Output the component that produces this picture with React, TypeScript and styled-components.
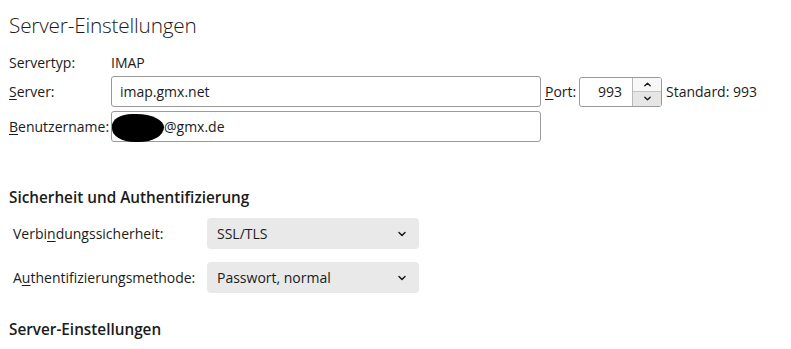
import React from "react";
import styled, { createGlobalStyle } from "styled-components";

const GlobalStyle = createGlobalStyle`
  html, body {
    margin: 0;
    padding: 0;
    background: #ffffff;
  }
  body {
    font-family: "Open Sans", "Noto Sans", sans-serif;
    color: #1b1b1b;
    font-size: 14px;
  }
`;

const Page = styled.div`
  width: 791px;
  height: 349px;
  overflow: hidden;
  padding: 0 0 0 9px;
  box-sizing: border-box;
`;

const Title = styled.h1`
  margin: 0;
  padding-top: 10px;
  font-size: 20.8px;
  font-weight: 300;
  line-height: 30px;
  letter-spacing: -0.2px;
`;

const ServerGrid = styled.div`
  display: grid;
  grid-template-columns: 102px 430px 38px 83px 1fr;
  grid-template-rows: 20px 31px 31px;
  row-gap: 4px;
  align-items: center;
  margin-top: 12px;
`;

const Label = styled.label`
  white-space: nowrap;
`;

const Key = styled.span`
  text-decoration: underline;
  text-underline-offset: 2px;
`;

const Field = styled.div`
  box-sizing: border-box;
  height: 31px;
  border: 1px solid #9a9a9a;
  border-radius: 3px;
  display: flex;
  align-items: center;
  padding: 0 8px;
  background: #fff;
`;

const Redaction = styled.span`
  display: inline-block;
  width: 52px;
  height: 28px;
  margin-left: -8px;
  margin-top: 2px;
  background: #000;
  border-radius: 40% 55% 50% 45% / 45% 50% 55% 50%;
`;

const PortLabel = styled(Label)`
  padding-left: 4px;
`;

const PortBox = styled.div`
  box-sizing: border-box;
  height: 30px;
  border: 1px solid #9a9a9a;
  border-radius: 3px;
  display: flex;
  overflow: hidden;
`;

const PortValue = styled.div`
  flex: 1;
  display: flex;
  align-items: center;
  justify-content: flex-end;
  padding-right: 10px;
`;

const Spin = styled.div`
  width: 28px;
  border-left: 1px solid #b8b8b8;
  display: flex;
  flex-direction: column;
  background: #f0f0f0;
`;

const SpinButton = styled.div<{ $top?: boolean }>`
  flex: 1;
  display: flex;
  align-items: center;
  justify-content: center;
  background: ${(p) => (p.$top ? "#f7f7f7" : "#e6e6e6")};
  border-top: ${(p) => (p.$top ? "none" : "1px solid #c4c4c4")};
`;

const Standard = styled.span`
  padding-left: 4px;
  white-space: nowrap;
`;

const SectionTitle = styled.h2<{ $top: number }>`
  margin: ${(p) => p.$top}px 0 0 0;
  font-size: 15.3px;
  font-weight: 600;
  line-height: 20px;
`;

const SelectGrid = styled.div`
  display: grid;
  grid-template-columns: 194px 212px;
  row-gap: 13px;
  align-items: center;
  margin-top: 11px;
  padding-left: 4px;
`;

const Select = styled.div`
  box-sizing: border-box;
  height: 31px;
  border-radius: 4px;
  background: #e9e9e9;
  display: flex;
  align-items: center;
  justify-content: space-between;
  padding: 0 12px 0 10px;
`;

const Chevron = ({ up = false, size = 10 }: { up?: boolean; size?: number }) => (
  <svg width={size} height={size} viewBox="0 0 10 10">
    <path
      d={up ? "M2 6.5 L5 3.5 L8 6.5" : "M2 3.5 L5 6.5 L8 3.5"}
      fill="none"
      stroke="#1b1b1b"
      strokeWidth="1.5"
      strokeLinecap="round"
      strokeLinejoin="round"
    />
  </svg>
);

const App: React.FC = () => {
  return (
    <Page>
      <GlobalStyle />
      <Title>Server-Einstellungen</Title>
      <ServerGrid>
        <Label>Servertyp:</Label>
        <span>IMAP</span>
        <span />
        <span />
        <span />

        <Label>
          <Key>S</Key>erver:
        </Label>
        <Field>imap.gmx.net</Field>
        <PortLabel>
          <Key>P</Key>ort:
        </PortLabel>
        <PortBox>
          <PortValue>993</PortValue>
          <Spin>
            <SpinButton $top>
              <Chevron up size={9} />
            </SpinButton>
            <SpinButton>
              <Chevron size={9} />
            </SpinButton>
          </Spin>
        </PortBox>
        <Standard>Standard: 993</Standard>

        <Label>
          <Key>B</Key>enutzername:
        </Label>
        <Field>
          <Redaction />
          @gmx.de
        </Field>
        <span />
        <span />
        <span />
      </ServerGrid>

      <SectionTitle $top={45}>Sicherheit und Authentifizierung</SectionTitle>
      <SelectGrid>
        <Label>
          Verbi<Key>n</Key>dungssicherheit:
        </Label>
        <Select>
          SSL/TLS
          <Chevron />
        </Select>
        <Label>
          A<Key>u</Key>thentifizierungsmethode:
        </Label>
        <Select>
          Passwort, normal
          <Chevron />
        </Select>
      </SelectGrid>

      <SectionTitle $top={26}>Server-Einstellungen</SectionTitle>
    </Page>
  );
};

export default App;
